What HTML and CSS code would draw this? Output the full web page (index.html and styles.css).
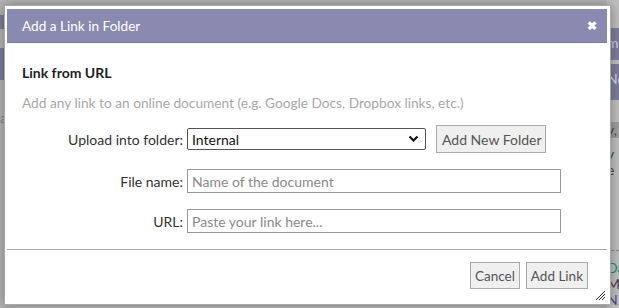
FILE: index.html
```html
<!DOCTYPE html>
<html lang="en">
  <head>
    <meta charset="UTF-8" />
    <meta name="viewport" content="width=device-width, initial-scale=1.0" />
    <title>Add a Link in Folder</title>
    <link rel="stylesheet" href="styles.css">
  </head>
  <body>
    <div class="page">
      <div class="side left">
        <div class="blk b1"></div>
        <div class="blk b2"></div>
        <span class="frag">a</span>
      </div>
      <div class="middle"></div>
      <div class="side right">
        <div class="blk b3"><span>m</span></div>
        <div class="blk b4"><span>No</span></div>
        <div class="frag f1">y,</div>
        <div class="frag f2">y<br />e</div>
        <div class="dash"></div>
        <div class="frag teal">Da</div>
        <div class="frag">M</div>
        <div class="frag navy">N</div>
      </div>
    </div>

    <div class="dialog">
      <div class="titlebar">
        <span class="title">Add a Link in Folder</span>
        <span class="close">&#10006;</span>
      </div>
      <div class="content">
        <h3>Link from URL</h3>
        <p class="hint">Add any link to an online document (e.g. Google Docs, Dropbox links, etc.)</p>
        <div class="form">
          <label class="lbl">Upload into folder:</label>
          <div class="ctrl">
            <div class="select">
              <span>Internal</span>
              <svg width="11" height="8" viewBox="0 0 11 8"><path d="M1.5 1.5 L5.5 5.5 L9.5 1.5" fill="none" stroke="#111" stroke-width="2.2"/></svg>
            </div>
            <button class="btn folder-btn">Add New Folder</button>
          </div>
          <label class="lbl">File name:</label>
          <div class="ctrl"><input class="field" type="text" placeholder="Name of the document" /></div>
          <label class="lbl">URL:</label>
          <div class="ctrl"><input class="field" type="text" placeholder="Paste your link here..." /></div>
        </div>
      </div>
      <div class="footer">
        <button class="btn small">Cancel</button>
        <button class="btn small">Add Link</button>
        <svg class="grip" width="12" height="12" viewBox="0 0 12 12">
          <path d="M11 2 L2 11 M11 5 L5 11 M11 8 L8 11" stroke="#333" stroke-width="1"/>
        </svg>
      </div>
    </div>
  </body>
</html>
```

FILE: styles.css
```css
:root {
  --overlay: #b4b4b4;
  --title-bg: #8a8ab0;
  --text: #333333;
  --muted: #a8a8a8;
  --line: #a9a9a9;
}

html,
body {
  margin: 0;
  height: 100%;
}

body {
  font-family: Lato, "Open Sans", sans-serif;
  background-color: var(--overlay);
  overflow: hidden;
  position: relative;
}

/* page behind the modal */
.page {
  display: flex;
  height: 100%;
}

.side {
  display: flex;
  flex-direction: column;
  font-size: 14px;
  color: #333;
  overflow: hidden;
}

.left {
  width: 6px;
  padding-top: 15px;
}

.middle {
  flex: 1;
}

.right {
  width: 12px;
  padding-top: 28px;
  background-color: #bdbdbd;
}

.blk {
  background-color: #7c7c99;
  color: #d0d0e0;
  line-height: 30px;
}

.b1 {
  height: 14px;
}

.b2 {
  height: 32px;
  margin-top: 19px;
}

.b3 {
  height: 32px;
}

.b4 {
  height: 36px;
  margin-top: 4px;
}

.frag {
  line-height: 16px;
  color: #444;
}

.left .frag {
  margin-top: 30px;
  color: #888;
}

.f1 {
  margin-top: 22px;
  background-color: #9e9e9e;
}

.f2 {
  margin-top: 8px;
}

.dash {
  height: 1px;
  margin-top: 72px;
  border-top: 1px dashed #888;
}

.teal {
  margin-top: 8px;
  color: #1b8a7e;
}

.navy {
  color: #4a4a8a;
}

/* modal */
.dialog {
  position: absolute;
  left: 4px;
  top: 5px;
  width: 600px;
  height: 292px;
  padding: 3px 3px 3px 2px;
  background-color: #fff;
  border: 1px solid var(--line);
  box-shadow: 0 0 10px rgba(0, 0, 0, 0.35);
  display: flex;
  flex-direction: column;
}

.titlebar {
  height: 33px;
  background-color: var(--title-bg);
  border-bottom: 1px solid #7a7a9c;
  display: flex;
  align-items: center;
  justify-content: space-between;
  padding: 0 10px 0 15px;
  color: #fff;
}

.title {
  font-size: 13.6px;
}

.close {
  font-size: 12px;
  font-weight: bold;
}

.content {
  flex: 1;
  padding: 0 15px;
  color: var(--text);
}

h3 {
  margin: 21px 0 0;
  font-size: 14px;
  font-weight: bold;
  line-height: 18px;
  color: #222;
}

.hint {
  margin: 12px 0 0;
  font-size: 13.7px;
  line-height: 18px;
  color: var(--muted);
}

.form {
  display: grid;
  grid-template-columns: 161px auto;
  column-gap: 4px;
  row-gap: 16px;
  align-items: center;
  margin-top: 13px;
}

.lbl {
  text-align: right;
  font-size: 14px;
  color: #333;
}

.ctrl {
  display: flex;
  align-items: center;
}

.select {
  width: 227px;
  height: 20px;
  padding: 0 6px 0 4px;
  border: 1px solid #555;
  border-radius: 2px;
  display: flex;
  align-items: center;
  justify-content: space-between;
  font-size: 14px;
  color: #111;
}

.btn {
  font-family: Lato, "Open Sans", sans-serif;
  font-size: 14px;
  color: #555;
  background-color: #efefef;
  border: 1px solid #aaa;
  border-radius: 0;
  height: 27px;
  padding: 0 5px;
  white-space: nowrap;
  cursor: pointer;
}

.btn.small {
  font-size: 13.5px;
  padding: 0 4px;
}

.folder-btn {
  margin-left: 10px;
  width: 110px;
  height: 28px;
}

.field {
  width: 364px;
  height: 22px;
  padding: 0 4px;
  margin: 0;
  border: 1px solid #999;
  font-family: Lato, "Open Sans", sans-serif;
  font-size: 14px;
  color: #333;
}

.field::placeholder {
  color: #8a8a8a;
}

.footer {
  height: 51px;
  border-top: 1px solid var(--line);
  display: flex;
  justify-content: flex-end;
  align-items: center;
  gap: 6px;
  padding-right: 19px;
  position: relative;
}

.grip {
  position: absolute;
  right: 1px;
  bottom: 0;
}
```
